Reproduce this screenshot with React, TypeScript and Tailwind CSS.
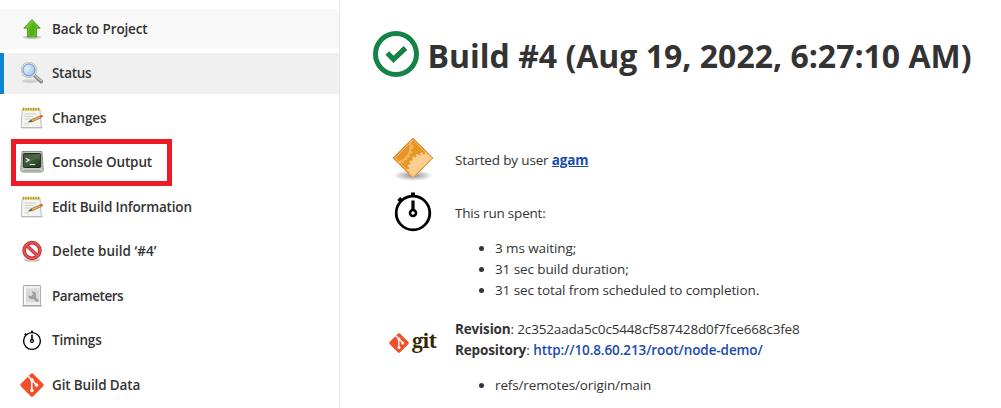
import type { ReactNode } from 'react';

function UpArrow() {
  return (
    <svg width="24" height="24" viewBox="0 0 24 24">
      <defs>
        <linearGradient id="up" x1="0" y1="0" x2="1" y2="1">
          <stop offset="0" stopColor="#8fd93f" />
          <stop offset="0.5" stopColor="#4fb012" />
          <stop offset="1" stopColor="#55b814" />
        </linearGradient>
      </defs>
      <ellipse cx="12" cy="20.3" rx="9" ry="1.8" fill="#000" opacity="0.18" />
      <path d="M12 2.6 20.2 11.2H16.5V20H7.5V11.2H3.8Z" fill="url(#up)" stroke="#4a9620" strokeWidth="0.9" strokeLinejoin="round" />
      <path d="M12 4.2 17.8 10.3H15.6V19H8.5V10.3H6.2Z" fill="none" stroke="#a6e465" strokeWidth="0.5" opacity="0.6" />
    </svg>
  );
}

function Magnifier() {
  return (
    <svg width="24" height="24" viewBox="0 0 24 24">
      <defs>
        <radialGradient id="lens" cx="0.35" cy="0.35" r="0.7">
          <stop offset="0" stopColor="#e3eefb" />
          <stop offset="1" stopColor="#9dc0ec" />
        </radialGradient>
      </defs>
      <ellipse cx="10" cy="20.2" rx="8" ry="2" fill="#000" opacity="0.13" />
      <path d="M14.5 14.5 21.3 20.6" stroke="#808080" strokeWidth="3.6" strokeLinecap="round" />
      <path d="M15.5 14.9 21.3 20" stroke="#c6c6c6" strokeWidth="1.5" strokeLinecap="round" />
      <circle cx="9" cy="9" r="7.2" fill="url(#lens)" stroke="#a9aba9" strokeWidth="1.8" />
      <circle cx="9" cy="9" r="7.1" fill="none" stroke="#eeeeec" strokeWidth="1" />
      <circle cx="9" cy="9" r="5.9" fill="none" stroke="#6d92c6" strokeWidth="0.8" />
    </svg>
  );
}

function Notepad() {
  return (
    <svg width="24" height="24" viewBox="0 0 24 24">
      <rect x="1" y="21" width="22" height="1.6" rx="0.8" fill="#000" opacity="0.2" />
      <path d="M2.2 3.5H20L21.3 21.5H1.2Z" fill="#f4f4f2" stroke="#b4b4b0" strokeWidth="0.9" />
      <path d="M2.5 2.3H20V4.6H2.5Z" fill="#dccb58" />
      <path d="M3.5 1.7V4.3M6 1.7V4.3M8.5 1.7V4.3M11 1.7V4.3M13.5 1.7V4.3M16 1.7V4.3M18.5 1.7V4.3" stroke="#a08f25" strokeWidth="1" />
      <path d="M4.5 8H16M4.5 10.5H13M4.5 13H11M4.5 18H9" stroke="#c4c4c1" strokeWidth="0.8" />
      <path d="M9 16 11.3 13.6 20.3 9.8 21.5 11.4 12.8 15.7Z" fill="#e8aa52" stroke="#946a34" strokeWidth="0.6" />
      <path d="M7.5 16.6 11.2 13.6 12.6 15.7Z" fill="#66604f" />
      <path d="M20 9.7 21.8 9.1Q23.4 9.1 22.8 10.8L21.2 11.6Z" fill="#dc4941" />
    </svg>
  );
}

function Terminal() {
  return (
    <svg width="24" height="24" viewBox="0 0 24 24">
      <defs>
        <linearGradient id="screen" x1="0" y1="0" x2="1" y2="1">
          <stop offset="0" stopColor="#243c22" />
          <stop offset="0.5" stopColor="#3f5a38" />
          <stop offset="1" stopColor="#1b331b" />
        </linearGradient>
      </defs>
      <path d="M2 1.5H22L23.3 20.5 21.5 22H2.5L.7 20.5Z" fill="#c7cac4" stroke="#858883" strokeWidth="0.9" strokeLinejoin="round" />
      <rect x="3.3" y="3.5" width="17.4" height="14" rx="1" fill="url(#screen)" stroke="#1c2a1c" />
      <path d="M4 4H20V9Q13 8 9 12.5L4 13Z" fill="#718b63" opacity="0.3" />
      <path d="m5.8 8.2 3.4 1.9-3.4 1.9M9.8 14.5h5.4" fill="none" stroke="#e8f5e3" strokeWidth="1.2" />
      <path d="M3.5 20.3H20.5" stroke="#a1a59d" />
    </svg>
  );
}

function Forbidden() {
  return (
    <svg width="24" height="24" viewBox="0 0 24 24">
      <ellipse cx="12" cy="21" rx="8" ry="1.7" fill="#000" opacity="0.22" />
      <circle cx="12" cy="11.5" r="7.9" fill="#fff" stroke="#c42222" strokeWidth="3.6" />
      <path d="m6.5 6.2 11 10.6" stroke="#c42222" strokeWidth="3.4" />
      <circle cx="12" cy="11.5" r="7.9" fill="none" stroke="#e55353" strokeWidth="2" />
      <path d="m6.5 6.2 11 10.6" stroke="#e55353" strokeWidth="2" />
    </svg>
  );
}

function Wrench() {
  return (
    <svg width="24" height="24" viewBox="0 0 24 24">
      <path d="M2 22H22" stroke="#777" strokeWidth="1.2" opacity="0.6" />
      <rect x="3.4" y="1.5" width="17.2" height="20" rx="0.8" fill="#f0f0f0" stroke="#a6a6a6" />
      <rect x="6" y="4.3" width="13.5" height="14" fill="#d9d9d9" />
      <path d="M4.8 2.5V20.5" stroke="#fff" />
      <path d="m12.7 12.3 5.3 5" stroke="#a0a0a0" strokeWidth="2.8" />
      <path d="M11.8 7.2A4 4 0 1 1 8.2 11.5L11 12.3 13 10.2Z" fill="#a0a0a0" />
    </svg>
  );
}

function Stopwatch({ large = false }: { large?: boolean }) {
  return (
    <svg width={large ? 48 : 24} height={large ? 48 : 24} viewBox="0 0 48 48">
      <circle cx="24" cy="26" r="16.8" fill="none" stroke="#000" strokeWidth="2.8" />
      <path d="M24 5.5V10M9.7 11.5l3 3" stroke="#000" strokeWidth="4" />
      <path d="M24 13.5V23" stroke="#000" strokeWidth="3.2" />
      <circle cx="24" cy="26" r="3" fill="#fff" stroke="#000" strokeWidth="2.6" />
    </svg>
  );
}

function GitMark({ size = 24 }: { size?: number }) {
  return (
    <svg width={size} height={size} viewBox="0 0 24 24" className="shrink-0">
      <path d="M10.9.7Q12 0 13.1.7L23.4 10.9Q24 12 23.4 13.1L13.1 23.4Q12 24 10.9 23.4L.6 13.1Q0 12 .6 10.9Z" fill="#f34f29" />
      <path d="M8.2 3.3 11.8 7V18M12.1 7.2 16.5 12" fill="none" stroke="#fff" strokeWidth="1.6" />
      <circle cx="11.9" cy="7.1" r="1.8" fill="#fff" />
      <circle cx="11.9" cy="17.5" r="1.8" fill="#fff" />
      <circle cx="16.5" cy="12.1" r="1.8" fill="#fff" />
    </svg>
  );
}

function GearDiamond() {
  return (
    <svg width="48" height="48" viewBox="0 0 48 48">
      <defs>
        <radialGradient id="shadow">
          <stop offset="0" stopColor="#000" stopOpacity="0.45" />
          <stop offset="1" stopColor="#000" stopOpacity="0" />
        </radialGradient>
        <clipPath id="diamond"><path d="M24 4 44 24 24 44 4 24Z" /></clipPath>
      </defs>
      <ellipse cx="24" cy="41.5" rx="20" ry="5.5" fill="url(#shadow)" />
      <g clipPath="url(#diamond)">
        <path d="M0 0H48V48H0Z" fill="#e59624" />
        <circle cx="6" cy="13" r="16.5" fill="#f2b65d" stroke="#f2b65d" strokeWidth="3" strokeDasharray="2.2 2" />
        <circle cx="6" cy="13" r="14.5" fill="#e59624" />
        <circle cx="36" cy="36" r="16" fill="#f8ce91" stroke="#f8ce91" strokeWidth="3.5" strokeDasharray="2.4 2" />
      </g>
      <path d="M24 4.3 43.7 24 24 43.7 4.3 24Z" fill="none" stroke="#e58024" strokeWidth="1" strokeLinejoin="round" />
      <path d="M24 6 42 24 24 42 6 24Z" fill="none" stroke="#fbc17a" strokeWidth="0.8" />
    </svg>
  );
}

function Item({ icon, children, tone = '', tracking = 'tracking-[-0.15px]' }: { icon: ReactNode; children: ReactNode; tone?: string; tracking?: string }) {
  return (
    <div className={`flex h-[40.5px] items-center pl-5 ${tone}`}>
      {icon}
      <span className={`ml-2 text-[13.5px] leading-5 font-semibold whitespace-nowrap ${tracking}`}>{children}</span>
    </div>
  );
}

export default function App() {
  return (
    <div className="flex h-[408px] w-[1001px] overflow-hidden bg-white font-['Open_Sans','Noto_Sans',sans-serif] text-[#333]">
      <aside className="flex w-[340px] shrink-0 flex-col gap-1 border-r border-[#eaeaea] pt-[8.5px]">
        <Item icon={<UpArrow />} tone="bg-[#f8f8f8]">Back to Project</Item>
        <Item icon={<Magnifier />} tone="bg-[#f0f0f0] shadow-[inset_4px_0_0_#0b84d1]" tracking="tracking-[-0.3px]">Status</Item>
        <Item icon={<Notepad />}>Changes</Item>
        <div className="relative">
          <Item icon={<Terminal />}>Console Output</Item>
          <div className="absolute top-[-3px] left-[11px] h-[47px] w-[161px] border-[5px] border-[#ed1c24]" />
        </div>
        <Item icon={<Notepad />} tracking="tracking-[-0.18px]">Edit Build Information</Item>
        <Item icon={<Forbidden />} tracking="tracking-[0.02px]">Delete build ‘#4’</Item>
        <Item icon={<Wrench />} tracking="tracking-[-0.48px]">Parameters</Item>
        <Item icon={<Stopwatch />}>Timings</Item>
        <Item icon={<GitMark />}>Git Build Data</Item>
      </aside>

      <main className="flex grow flex-col">
        <h1 className="flex h-[108px] items-center pl-[33px] text-[32px] font-bold whitespace-nowrap">
          <svg width="46" height="46" viewBox="0 0 46 46" className="mr-[8.5px] shrink-0">
            <circle cx="23" cy="23" r="20.5" fill="none" stroke="#138347" strokeWidth="5" />
            <path d="m14.3 22 6.2 6.3L32.5 17" fill="none" stroke="#138347" strokeWidth="5.2" />
          </svg>
          <span className="pt-[3px]">Build #4 (Aug 19, 2022, 6:27:10 AM)</span>
        </h1>

        <div className="mt-[26px] flex pl-[49px] text-[13.5px] leading-[21px]">
          <GearDiamond />
          <p className="mt-[15.5px] ml-[18px] tracking-[-0.15px]">Started by user <b className="font-bold text-[#1a4bad] underline">agam</b></p>
        </div>

        <div className="mt-[5px] flex pl-[49px] text-[13.5px] leading-[21px]">
          <Stopwatch large />
          <div className="ml-[18px] pt-[15.5px]">
            <p className="tracking-[-0.2px]">This run spent:</p>
            <ul className="mt-[14px] list-disc pl-10 tracking-[-0.1px]">
              <li>3 ms waiting;</li>
              <li>31 sec build duration;</li>
              <li>31 sec total from scheduled to completion.</li>
            </ul>
          </div>
        </div>

        <div className="mt-[18px] flex pl-[49px] text-[13.5px] leading-[21px]">
          <div className="flex h-[48px] w-[48px] items-center pt-px">
            <GitMark size={20} />
            <span className="mb-[4px] ml-[3px] font-['Noto_Serif','DejaVu_Serif',serif] text-[20px] leading-5 font-bold tracking-[-0.8px] text-[#362701]">git</span>
          </div>
          <div className="ml-[18px] whitespace-nowrap">
            <p><b className="tracking-[-0.15px]">Revision</b><span className="tracking-[-0.16px]">: 2c352aada5c0c5448cf587428d0f7fce668c3fe8</span></p>
            <p><b className="tracking-[-0.15px]">Repository</b>: <b className="font-semibold tracking-[-0.1px] text-[#1a4bad]">http://10.8.60.213/root/node-demo/</b></p>
            <ul className="mt-[14px] list-disc pl-10 tracking-[-0.13px]"><li>refs/remotes/origin/main</li></ul>
          </div>
        </div>
      </main>
    </div>
  );
}
